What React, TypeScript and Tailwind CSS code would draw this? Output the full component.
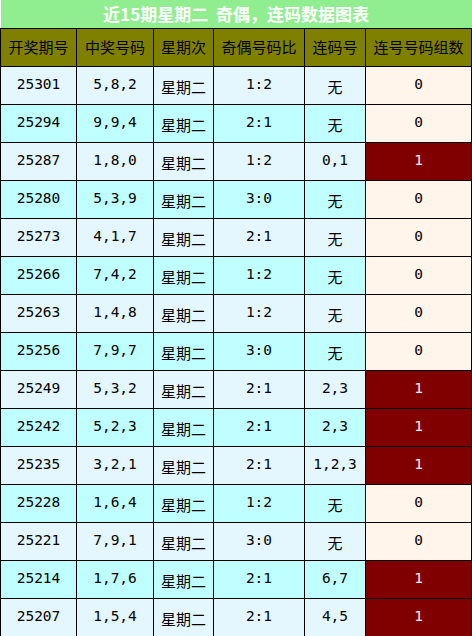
const rows: [string, string, string, string, string, number][] = [
  ["25301", "5,8,2", "星期二", "1:2", "无", 0],
  ["25294", "9,9,4", "星期二", "2:1", "无", 0],
  ["25287", "1,8,0", "星期二", "1:2", "0,1", 1],
  ["25280", "5,3,9", "星期二", "3:0", "无", 0],
  ["25273", "4,1,7", "星期二", "2:1", "无", 0],
  ["25266", "7,4,2", "星期二", "1:2", "无", 0],
  ["25263", "1,4,8", "星期二", "1:2", "无", 0],
  ["25256", "7,9,7", "星期二", "3:0", "无", 0],
  ["25249", "5,3,2", "星期二", "2:1", "2,3", 1],
  ["25242", "5,2,3", "星期二", "2:1", "2,3", 1],
  ["25235", "3,2,1", "星期二", "2:1", "1,2,3", 1],
  ["25228", "1,6,4", "星期二", "1:2", "无", 0],
  ["25221", "7,9,1", "星期二", "3:0", "无", 0],
  ["25214", "1,7,6", "星期二", "2:1", "6,7", 1],
  ["25207", "1,5,4", "星期二", "2:1", "4,5", 1],
]

const mono = "font-['DejaVu_Sans_Mono',monospace] text-[14.5px]"
const cjk = "font-['Noto_Sans_CJK_SC',sans-serif] text-[15px]"

export default function App() {
  return (
    <div className="w-[472px] h-[636px] bg-white">
      <table className="border-collapse w-[471px] table-fixed text-black">
        <colgroup>
          <col className="w-[76px]" />
          <col className="w-[77px]" />
          <col className="w-[60px]" />
          <col className="w-[91px]" />
          <col className="w-[61px]" />
          <col className="w-[106px]" />
        </colgroup>
        <thead>
          <tr>
            <th
              colSpan={6}
              className="h-[28px] bg-[#90ee90] text-white text-[17px] font-bold font-['Noto_Sans_CJK_SC',sans-serif] text-center leading-none border border-black border-t-0 border-x-0"
            >
              近15期星期二&nbsp;&nbsp;奇偶，连码数据图表
            </th>
          </tr>
          <tr className="bg-[#808000]">
            {["开奖期号", "中奖号码", "星期次", "奇偶号码比", "连码号", "连号号码组数"].map((h) => (
              <th key={h} className={`h-[38px] border border-black font-normal text-center ${cjk}`}>
                {h}
              </th>
            ))}
          </tr>
        </thead>
        <tbody>
          {rows.map((r, i) => {
            const bg = i % 2 === 0 ? "bg-[#e4f7ff]" : "bg-[#c0ffff]"
            return (
              <tr key={r[0]} className={bg}>
                <td className={`h-[38px] border border-black text-center ${mono}`}>{r[0]}</td>
                <td className={`border border-black text-center ${mono}`}>{r[1]}</td>
                <td className={`border border-black text-center pt-[4px] ${cjk}`}>{r[2]}</td>
                <td className={`border border-black text-center ${mono}`}>{r[3]}</td>
                <td className={`border border-black text-center ${r[4] === "无" ? `${cjk} pt-[4px]` : mono}`}>{r[4]}</td>
                <td
                  className={`border border-black text-center ${mono} ${
                    r[5] ? "bg-[#800000] text-[#eeeeee]" : "bg-[#fff5eb]"
                  }`}
                >
                  {r[5]}
                </td>
              </tr>
            )
          })}
        </tbody>
      </table>
    </div>
  )
}
